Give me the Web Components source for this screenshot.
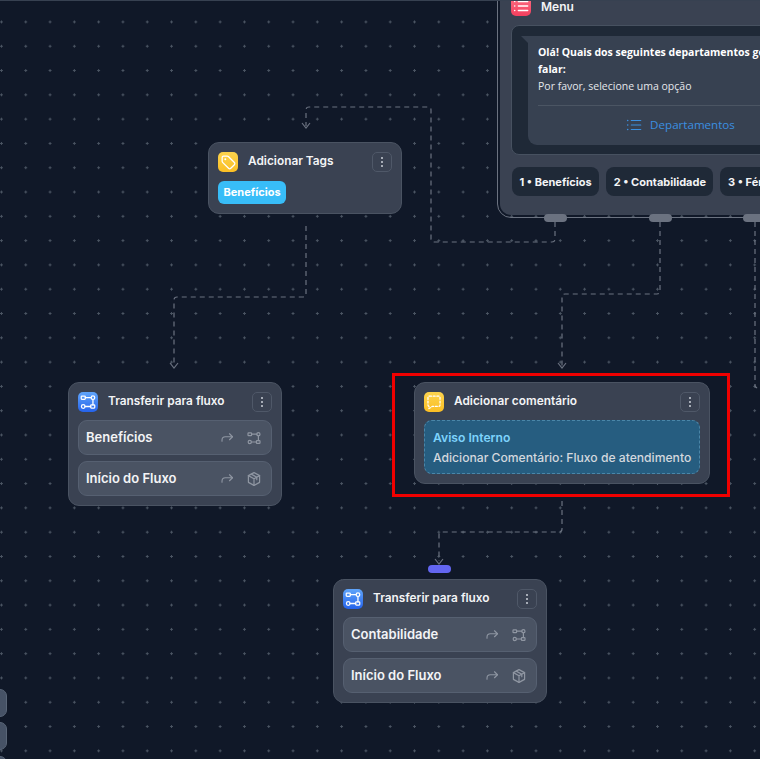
<!DOCTYPE html>
<html lang="pt">
<head>
<meta charset="utf-8">
<title>Fluxo</title>
<style>
  html, body { margin: 0; height: 100%; background: #111827; overflow: hidden; }
</style>
</head>
<body>
<flow-canvas>
  <menu-node style="left:500px;top:-14px"></menu-node>

  <flow-node style="left:208px;top:142px;width:194px" title="Adicionar Tags" icon="tag" tone="yellow">
    <span class="tag-slot"><tag-pill>Benefícios</tag-pill></span>
  </flow-node>

  <flow-node style="left:68px;top:382px;width:214px" title="Transferir para fluxo" icon="flow" tone="blue">
    <flow-row icon="flow">Benefícios</flow-row>
    <flow-row icon="box">Início do Fluxo</flow-row>
  </flow-node>

  <flow-node style="left:414px;top:382px;width:296px" title="Adicionar comentário" icon="comment" tone="yellow">
    <note-box heading="Aviso Interno">Adicionar Comentário: Fluxo de atendimento</note-box>
  </flow-node>

  <flow-node style="left:333px;top:579px;width:214px" title="Transferir para fluxo" icon="flow" tone="blue">
    <flow-row icon="flow">Contabilidade</flow-row>
    <flow-row icon="box">Início do Fluxo</flow-row>
  </flow-node>
</flow-canvas>

<script>
const icons = {
  tag: '<path d="M3.5 5v4.2c0 .5.2.9.5 1.2l6.6 6.6c.7.7 1.8.7 2.5 0l4-4c.7-.7.7-1.8 0-2.5L10.4 3.9c-.3-.3-.8-.5-1.2-.5H5c-.8 0-1.5.7-1.5 1.6z"/><circle cx="7" cy="7" r="1.1" fill="currentColor" stroke="none"/>',
  flow: '<rect x="2.5" y="3.5" width="4.5" height="3.5" rx=".8"/><circle cx="15.5" cy="5.2" r="2"/><circle cx="4.7" cy="15" r="2"/><rect x="13" y="13.2" width="4.5" height="3.5" rx=".8"/><path d="M7 5.2h6.5M6.7 15H13M15.5 7.2v6"/>',
  box: '<path d="M10 2l7 3.8v8.4L10 18l-7-3.8V5.8z"/><path d="M3 5.8l7 3.9 7-3.9M10 9.7V18M6.5 3.9l7 3.9v3"/>',
  comment: '<path stroke-dasharray="2.2 1.9" d="M5 3.5h10c1 0 1.7.7 1.7 1.7v8c0 1-.7 1.7-1.7 1.7H8l-3.6 2.4v-2.4c-.7-.2-1.1-.8-1.1-1.6V5.2c0-1 .7-1.7 1.7-1.7z"/>',
  list: '<path d="M7 5h10.5M7 10h10.5M7 15h10.5"/><circle cx="3" cy="5" r=".9" fill="currentColor" stroke="none"/><circle cx="3" cy="10" r=".9" fill="currentColor" stroke="none"/><circle cx="3" cy="15" r=".9" fill="currentColor" stroke="none"/>',
  share: '<path d="M14 5l4 4-4 4"/><path d="M18 9H8.5C5.5 9 4 10.8 4 13.5V15"/>'
};
const svgIcon = (name, size, sw = 1.5) =>
  `<svg width="${size}" height="${size}" viewBox="0 0 20 20" fill="none" stroke="currentColor" stroke-width="${sw}" stroke-linecap="round" stroke-linejoin="round">${icons[name]}</svg>`;

const tones = {
  yellow: 'linear-gradient(180deg,#fcd34d,#fbbf24)',
  blue: 'linear-gradient(180deg,#60a5fa,#2563eb)',
  red: 'linear-gradient(180deg,#fb7185,#f43f5e)'
};

class FlowCanvas extends HTMLElement {
  constructor() {
    super();
    this.attachShadow({ mode: 'open' });
    this.shadowRoot.innerHTML = `
      <style>
        :host {
          display: block; position: relative; width: 760px; height: 759px; overflow: hidden;
          background-color: #101828;
          background-image: radial-gradient(circle at center, #4b5563 0 1px, transparent 1.2px);
          background-size: 24.3px 24.3px;
          background-position: -10.7px 9.8px;
          font-family: Inter, "Liberation Sans", sans-serif;
        }
        :host::before { content: ''; position: absolute; left: 0; top: 0; right: 0; height: 1px; background: #374151; z-index: 3; }
        svg.edges { position: absolute; left: 0; top: 0; }
        .edge { fill: none; stroke: #6b7280; stroke-width: 1.2; stroke-dasharray: 5 4; }
        .arrow { fill: none; stroke: #6b7280; stroke-width: 1.2; }
        .handle { position: absolute; width: 23px; height: 8px; border-radius: 4px; background: #6366f1; left: 428px; top: 565px; }
        .frame { position: absolute; left: 392px; top: 373px; width: 338px; height: 124px; border: 3px solid #f00000; box-sizing: border-box; }
        .ctl { position: absolute; left: -20px; width: 26.5px; height: 28px; border-radius: 7px; background: #465266; border: 1px solid #5a6678; box-sizing: border-box; }
      </style>
      <svg class="edges" width="760" height="759">
        <path class="edge" d="M555 222V239Q555 242 552 242H434Q431 242 431 239V110Q431 107 428 107H309Q306 107 306 110V126"/>
        <path class="arrow" d="M302 123l4 5 4-5"/>
        <path class="edge" d="M660 222V291Q660 294 657 294H565Q562 294 562 297V366"/>
        <path class="arrow" d="M558 363l4 5 4-5"/>
        <path class="edge" d="M306 226V294Q306 297 303 297H177Q174 297 174 300V366"/>
        <path class="arrow" d="M170 363l4 5 4-5"/>
        <path class="edge" d="M755 222V385Q755 388 758 388H760"/>
        <path class="edge" d="M562 501V529Q562 532 559 532H442Q439 532 439 535V561"/>
        <path class="arrow" d="M435 559l4 5 4-5"/>
      </svg>
      <span class="handle"></span>
      <span class="ctl" style="top:689px"></span>
      <span class="ctl" style="top:722px"></span>
      <span class="ctl" style="top:756px"></span>
      <slot></slot>
      <span class="frame"></span>
    `;
  }
}

class FlowNode extends HTMLElement {
  constructor() {
    super();
    this.attachShadow({ mode: 'open' });
    const tone = tones[this.getAttribute('tone')];
    this.shadowRoot.innerHTML = `
      <style>
        :host {
          position: absolute; display: flex; flex-direction: column; gap: 8px;
          box-sizing: border-box; padding: 9px;
          background: #3a4252; border: 1px solid #4a5362; border-radius: 11px;
          color: #fff;
        }
        header { display: flex; align-items: center; height: 20px; }
        .icon { width: 20px; height: 20px; border-radius: 5px; background: ${tone}; color: #fff; display: flex; align-items: center; justify-content: center; }
        h3 { margin: 0 0 2px 10px; font-size: 11.85px; font-weight: 600; flex: 1; white-space: nowrap; color: #f3f4f6; }
        node-dots { margin-left: auto; }
        .body { display: flex; flex-direction: column; gap: 6px; }
      </style>
      <header>
        <span class="icon">${svgIcon(this.getAttribute('icon'), 18, 1.4)}</span>
        <h3>${this.getAttribute('title')}</h3>
        <node-dots></node-dots>
      </header>
      <div class="body"><slot></slot></div>
    `;
  }
}

class NodeDots extends HTMLElement {
  constructor() {
    super();
    this.attachShadow({ mode: 'open' });
    this.shadowRoot.innerHTML = `
      <style>
        :host { display: flex; flex-direction: column; align-items: center; justify-content: center; gap: 2px; width: 20px; height: 20px; box-sizing: border-box; border: 1px solid #4f5868; border-radius: 5px; }
        i { width: 2px; height: 2px; border-radius: 50%; background: #cbd0d8; }
      </style>
      <i></i><i></i><i></i>
    `;
  }
}

class TagPill extends HTMLElement {
  constructor() {
    super();
    this.attachShadow({ mode: 'open' });
    this.shadowRoot.innerHTML = `
      <style>
        :host { display: inline-flex; align-items: center; height: 23px; padding: 0 5.5px; border-radius: 6px; background: #38bdf8; color: #fff; font-size: 11px; font-weight: 700; }
      </style>
      <slot></slot>
    `;
  }
}

class FlowRow extends HTMLElement {
  constructor() {
    super();
    this.attachShadow({ mode: 'open' });
    this.shadowRoot.innerHTML = `
      <style>
        :host { display: flex; align-items: center; height: 35px; box-sizing: border-box; padding: 0 9px 0 7px; border-radius: 9px; background: #4a5363; border: 1px solid #566071; color: #f3f4f6; font-size: 13px; font-weight: 600; }
        .label { flex: 1; margin-bottom: 2px; }
        .i { display: flex; color: #8f96a2; }
        .i + .i { margin-left: 12px; }
      </style>
      <span class="label"><slot></slot></span>
      <span class="i">${svgIcon('share', 15)}</span>
      <span class="i">${svgIcon(this.getAttribute('icon'), 16)}</span>
    `;
  }
}

class NoteBox extends HTMLElement {
  constructor() {
    super();
    this.attachShadow({ mode: 'open' });
    this.shadowRoot.innerHTML = `
      <style>
        :host { display: flex; flex-direction: column; justify-content: center; gap: 5px; height: 54px; box-sizing: border-box; padding: 0 8px; border-radius: 8px; background: #265d80; border: 1px dashed #4a86a8; font-size: 12.15px; font-weight: 500; color: #d3d8de; white-space: nowrap; }
        b { color: #7dd3fc; font-weight: 600; }
      </style>
      <b>${this.getAttribute('heading')}</b>
      <span><slot></slot></span>
    `;
  }
}

class MenuNode extends HTMLElement {
  constructor() {
    super();
    this.attachShadow({ mode: 'open' });
    this.shadowRoot.innerHTML = `
      <style>
        :host {
          position: absolute; display: flex; flex-direction: column; width: 400px; height: 229px;
          box-sizing: border-box; padding: 10px 11px;
          background: #3a4252; border-radius: 11px; color: #fff;
          outline: 1.5px solid #6b7280; outline-offset: 2px;
        }
        header { display: flex; align-items: center; gap: 10px; height: 20px; font-size: 12px; font-weight: 600; color: #f3f4f6; }
        .icon { width: 20px; height: 20px; border-radius: 5px; background: ${tones.red}; color: #fff; display: flex; align-items: center; justify-content: center; }
        .chat { margin-top: 9px; height: 130px; box-sizing: border-box; padding: 10px 16px; background: #1f2937; border: 1px solid #475160; border-radius: 8px; display: flex; }
        .bubble { position: relative; width: 304px; height: 109px; box-sizing: border-box; padding: 8px 10px 0; background: #374151; border-radius: 0 9px 9px 9px; font: 10.5px/16px "Open Sans", "Noto Sans", sans-serif; color: #e5e7eb; }
        .bubble::before { content: ''; position: absolute; left: -7px; top: 0; border-top: 7px solid #374151; border-left: 7px solid transparent; }
        .bubble strong { display: block; font-weight: 700; color: #fff; line-height: 17px; }
        .bubble hr { border: 0; border-top: 1px solid #4b5563; margin: 11px 0 10px; }
        .bubble .btn { display: flex; align-items: center; justify-content: center; gap: 7px; color: #3b8fe0; font-size: 11.6px; }
        .btn svg { display: block; }
        .chips { display: flex; gap: 7px; margin: 12px 0 0 1px; }
      </style>
      <header><span class="icon">${svgIcon('list', 18, 1.4)}</span>Menu</header>
      <div class="chat">
        <div class="bubble">
          <strong>Olá! Quais dos seguintes departamentos gostaria de falar:</strong>
          Por favor, selecione uma opção
          <hr>
          <div class="btn">${svgIcon('list', 18, 1.3)}Departamentos</div>
        </div>
      </div>
      <div class="chips">
        <option-chip>1 • Benefícios</option-chip>
        <option-chip>2 • Contabilidade</option-chip>
        <option-chip>3 • Férias</option-chip>
      </div>
      <node-handle style="left:44px"></node-handle>
      <node-handle style="left:149px"></node-handle>
      <node-handle style="left:243px"></node-handle>
    `;
  }
}

class OptionChip extends HTMLElement {
  constructor() {
    super();
    this.attachShadow({ mode: 'open' });
    this.shadowRoot.innerHTML = `
      <style>
        :host { display: flex; align-items: center; height: 29px; padding: 0 7.5px; border-radius: 8px; background: #1f2937; color: #f3f4f6; font-size: 11px; font-weight: 700; white-space: nowrap; }
      </style>
      <slot></slot>
    `;
  }
}

class NodeHandle extends HTMLElement {
  constructor() {
    super();
    this.attachShadow({ mode: 'open' });
    this.shadowRoot.innerHTML = `
      <style>
        :host { position: absolute; bottom: -7px; width: 23px; height: 8px; border-radius: 4px; background: #6b7280; }
      </style>
    `;
  }
}

customElements.define('flow-canvas', FlowCanvas);
customElements.define('flow-node', FlowNode);
customElements.define('node-dots', NodeDots);
customElements.define('tag-pill', TagPill);
customElements.define('flow-row', FlowRow);
customElements.define('note-box', NoteBox);
customElements.define('menu-node', MenuNode);
customElements.define('option-chip', OptionChip);
customElements.define('node-handle', NodeHandle);
</script>
</body>
</html>
